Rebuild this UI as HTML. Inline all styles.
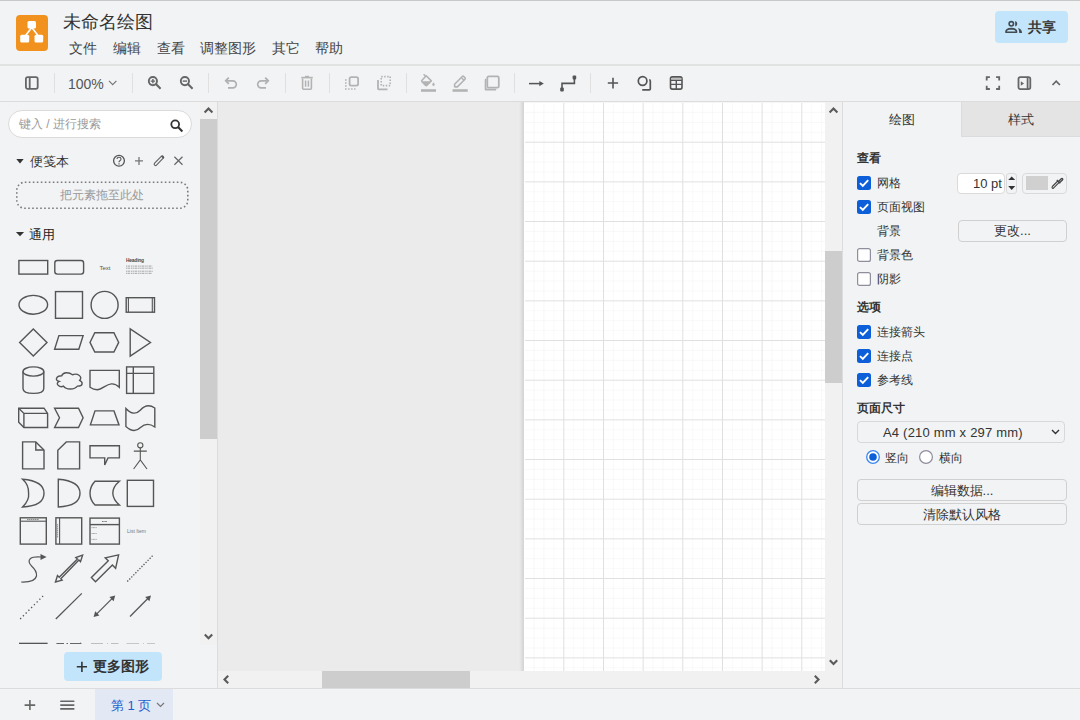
<!DOCTYPE html>
<html><head><meta charset="utf-8">
<style>
*{box-sizing:border-box}
html,body{margin:0;padding:0;width:1080px;height:720px;overflow:hidden;background:#f1f3f4;font-family:"Liberation Sans",sans-serif;color:#333}
.abs{position:absolute}
svg{position:absolute;overflow:visible}
.line{position:absolute;background:#dcdcdc}
.title{left:63px;top:10px;font-size:18px;color:#333;white-space:nowrap}
.menu{top:40px;font-size:14px;color:#444;white-space:nowrap}
.sep{top:73px;width:1px;height:20px;background:#e0e0e0}
.share{left:995px;top:11px;width:73px;height:32px;background:#c2e5fb;border-radius:4px}
.share span{position:absolute;left:33px;top:8px;font-size:14px;font-weight:bold;color:#3a3a3a}
#canvas{left:218px;top:102px;width:607px;height:569px;background:#ebebeb;overflow:hidden}
.sb{background:#f1f1f1}
.thumb{background:#cdcdcd}
.tab2{left:961px;top:102px;width:119px;height:35px;background:#e4e4e4;border-left:1px solid #dadce0;border-bottom:1px solid #dadce0}
.rp{font-size:12px;color:#333;white-space:nowrap}
.rpb{font-weight:bold}
.btn{border:1px solid #d0d0d0;border-radius:4px;background:#f1f3f4;font-size:13px;color:#333;text-align:center}
.sbt{font-size:13px;color:#333;white-space:nowrap}
</style></head><body>
<!-- ===== HEADER ===== -->
<div class="line" style="left:0;top:0;width:1080px;height:1px;background:#c8c8c8"></div>
<svg style="left:16px;top:15px" width="32" height="36" viewBox="0 0 32 36">
<rect x="0" y="0" width="32" height="36" rx="4" fill="#f1921f"/>
<path d="M15.8 12.5 L9.6 20.5 M15.8 12.5 L22 20.5" stroke="#fff" stroke-width="1.6" fill="none"/>
<rect x="11.5" y="6" width="8.5" height="7.6" rx="1.5" fill="#fff"/>
<rect x="4.2" y="19.8" width="9" height="7.7" rx="1.5" fill="#fff"/>
<rect x="18.5" y="19.8" width="8.7" height="7.7" rx="1.5" fill="#fff"/>
</svg>
<div class="abs title">未命名绘图</div>
<div class="abs menu" style="left:69px">文件</div>
<div class="abs menu" style="left:113px">编辑</div>
<div class="abs menu" style="left:157px">查看</div>
<div class="abs menu" style="left:200px">调整图形</div>
<div class="abs menu" style="left:272px">其它</div>
<div class="abs menu" style="left:315px">帮助</div>
<div class="abs share"><span>共享</span>
<svg style="left:10px;top:9px" width="18" height="13" viewBox="0 0 18 13">
<circle cx="6.3" cy="3.85" r="2.2" stroke="#424a52" stroke-width="1.6" fill="none"/>
<path d="M10.2 1.1 A2.8 2.8 0 0 1 10.2 6.5 Z" fill="#424a52"/>
<path d="M0.9 12.2 Q0.9 8.7 6.3 8.6 Q11.6 8.7 11.6 12.2 Z" stroke="#424a52" stroke-width="1.6" fill="none" stroke-linejoin="round"/>
<path d="M13 8 Q17 9 17 13 L14.3 13 Q14.3 10 13 8Z" fill="#424a52"/>
</svg>
</div>
<div class="line" style="left:0;top:64px;width:1080px;height:2px;background:#e1e3e2"></div>
<!-- ===== TOOLBAR ===== -->
<svg style="left:24px;top:75px" width="16" height="16" viewBox="0 0 16 16">
<rect x="1.9" y="2.1" width="11.8" height="11.8" rx="1.8" stroke="#666" stroke-width="1.8" fill="none"/>
<path d="M5.7 2.1 V13.9" stroke="#666" stroke-width="1.8"/>
</svg>
<div class="abs sep" style="left:54px"></div>
<div class="abs" style="left:68px;top:76px;font-size:14px;color:#555">100%</div>
<svg style="left:108px;top:80px" width="10" height="6" viewBox="0 0 10 6"><path d="M1 0.8 L4.7 4.6 L8.4 0.8" stroke="#777" stroke-width="1.2" fill="none"/></svg>
<div class="abs sep" style="left:132px"></div>
<!-- zoom in -->
<svg style="left:145px;top:73px" width="18" height="18" viewBox="0 0 18 18">
<circle cx="7.9" cy="8.1" r="4.1" stroke="#666" stroke-width="1.9" fill="none"/>
<path d="M10.9 11.1 L15.6 15.8" stroke="#666" stroke-width="2.1"/>
<path d="M5.7 8.1 H10.1 M7.9 5.9 V10.3" stroke="#666" stroke-width="1.4"/>
</svg>
<svg style="left:177px;top:73px" width="18" height="18" viewBox="0 0 18 18">
<circle cx="7.9" cy="8.1" r="4.1" stroke="#666" stroke-width="1.9" fill="none"/>
<path d="M10.9 11.1 L15.6 15.8" stroke="#666" stroke-width="2.1"/>
<path d="M5.7 8.1 H10.1" stroke="#666" stroke-width="1.4"/>
</svg>
<div class="abs sep" style="left:208px"></div>
<!-- undo / redo -->
<svg style="left:222px;top:74px" width="18" height="18" viewBox="0 0 18 18">
<path d="M4 6.8 H10.8 A3.5 3.5 0 0 1 10.8 13.8 H6" stroke="#b0b0b0" stroke-width="1.7" fill="none"/>
<path d="M6.8 3.7 L3.7 6.8 L6.8 9.9" stroke="#b0b0b0" stroke-width="1.7" fill="none"/>
</svg>
<svg style="left:254px;top:74px" width="18" height="18" viewBox="0 0 18 18">
<path d="M14 6.8 H7.2 A3.5 3.5 0 0 0 7.2 13.8 H12" stroke="#b0b0b0" stroke-width="1.7" fill="none"/>
<path d="M11.2 3.7 L14.3 6.8 L11.2 9.9" stroke="#b0b0b0" stroke-width="1.7" fill="none"/>
</svg>
<div class="abs sep" style="left:285px"></div>
<!-- delete -->
<svg style="left:298px;top:74px" width="18" height="18" viewBox="0 0 18 18">
<path d="M3.3 3.6 H14.8" stroke="#b3b3b3" stroke-width="1.6"/>
<path d="M7 2.6 H11" stroke="#b3b3b3" stroke-width="1.6"/>
<path d="M4.6 4.5 V14.2 Q4.6 15.2 5.6 15.2 H12.4 Q13.4 15.2 13.4 14.2 V4.5" stroke="#b3b3b3" stroke-width="1.6" fill="none"/>
<path d="M7.6 6.5 V12.8 M10.4 6.5 V12.8" stroke="#b3b3b3" stroke-width="1.5"/>
</svg>
<div class="abs sep" style="left:329px"></div>
<!-- to front -->
<svg style="left:343px;top:74px" width="18" height="18" viewBox="0 0 18 18">
<rect x="6.6" y="3.2" width="8.5" height="8.5" rx="1.6" stroke="#b3b3b3" stroke-width="1.8" fill="none"/>
<path d="M2.8 5.3 V15 H12.5" stroke="#b3b3b3" stroke-width="1.6" stroke-dasharray="1.5 1.5" fill="none"/>
</svg>
<svg style="left:375px;top:74px" width="18" height="18" viewBox="0 0 18 18">
<path d="M6.2 2.6 H15.2 V11.6 H6.2 Z" stroke="#b3b3b3" stroke-width="1.6" stroke-dasharray="1.5 1.5" fill="none"/>
<path d="M3 6 V14.5 Q3 15.3 3.8 15.3 H12.5" stroke="#b3b3b3" stroke-width="1.8" fill="none"/>
</svg>
<div class="abs sep" style="left:406px"></div>
<!-- fill -->
<svg style="left:419px;top:73px" width="18" height="20" viewBox="0 0 18 20">
<path d="M4.6 1.2 L6.4 3" stroke="#b3b3b3" stroke-width="1.5"/>
<path d="M7.2 2.8 L12.3 7.9 L8 12.2 Q7.2 13 6.4 12.2 L3 8.8 Q2.2 8 3 7.2 Z" stroke="#b3b3b3" stroke-width="1.6" fill="none" stroke-linejoin="round"/>
<path d="M3.4 8.3 H11.8 L8 12.2 Q7.2 13 6.4 12.2Z" fill="#b3b3b3"/>
<path d="M14.5 9.3 Q15.8 11 15.8 11.6 A1.3 1.3 0 0 1 13.2 11.6 Q13.2 11 14.5 9.3Z" fill="#b3b3b3"/>
<rect x="2" y="16.2" width="15" height="2.6" fill="#b3b3b3"/>
</svg>
<!-- line color -->
<svg style="left:451px;top:73px" width="18" height="20" viewBox="0 0 18 20">
<path d="M3.6 13.4 V11.2 L11.3 3.5 Q12 2.8 12.7 3.5 L14 4.8 Q14.7 5.5 14 6.2 L6.3 13.9 H4.1Z" stroke="#b3b3b3" stroke-width="1.6" fill="none" stroke-linejoin="round"/>
<path d="M10.2 4.6 L12.9 7.3" stroke="#b3b3b3" stroke-width="1.4"/>
<rect x="1.6" y="16.2" width="15.1" height="2.6" fill="#b3b3b3"/>
</svg>
<!-- shadow -->
<svg style="left:483px;top:74px" width="18" height="18" viewBox="0 0 18 18">
<path d="M3.3 4.8 H2.7 Q1.7 4.8 1.7 5.8 V15.4 Q1.7 16.4 2.7 16.4 H12.3 Q13.3 16.4 13.3 15.4 V14.8 H4.3 Q3.3 14.8 3.3 13.8 Z" fill="#b3b3b3"/>
<rect x="4.3" y="2.4" width="11.5" height="11.3" rx="1.5" stroke="#b3b3b3" stroke-width="1.8" fill="none"/>
</svg>
<div class="abs sep" style="left:514px"></div>
<!-- arrow -->
<svg style="left:527px;top:74px" width="18" height="18" viewBox="0 0 18 18">
<path d="M2 9.6 H14" stroke="#555" stroke-width="1.5"/>
<path d="M12.3 6.9 L16.8 9.6 L12.3 12.3 Z" fill="#555"/>
</svg>
<!-- waypoints -->
<svg style="left:558px;top:74px" width="20" height="18" viewBox="0 0 20 18">
<path d="M4 15 V9.4 H16.4 V3" stroke="#555" stroke-width="1.6" fill="none"/>
<rect x="2.2" y="13.6" width="3.6" height="4" rx="1" fill="#555"/>
<rect x="14.6" y="1.6" width="3.6" height="4" rx="1" fill="#555"/>
</svg>
<div class="abs sep" style="left:590px"></div>
<!-- plus -->
<svg style="left:604px;top:74px" width="18" height="18" viewBox="0 0 18 18">
<path d="M3.8 9 H14.1 M9 3.7 V14.4" stroke="#555" stroke-width="1.6"/>
</svg>
<!-- shapes -->
<svg style="left:635px;top:74px" width="18" height="18" viewBox="0 0 18 18">
<circle cx="7.6" cy="7" r="4.3" stroke="#555" stroke-width="1.7" fill="none"/>
<path d="M14.2 5.8 Q15.3 5.8 15.3 6.9 V14.8 Q15.3 15.8 14.3 15.8 H7.2" stroke="#555" stroke-width="1.7" fill="none"/>
</svg>
<!-- table -->
<svg style="left:667px;top:74px" width="18" height="18" viewBox="0 0 18 18">
<rect x="3.5" y="2.9" width="11.5" height="12.2" rx="1.8" stroke="#555" stroke-width="1.6" fill="none"/>
<rect x="4" y="4" width="10.5" height="1.7" fill="#bdbdbd"/>
<path d="M3.5 6.4 H15 M3.5 10.4 H15 M9.3 6.4 V15" stroke="#555" stroke-width="1.4"/>
</svg>
<!-- right toolbar -->
<svg style="left:984px;top:74px" width="18" height="18" viewBox="0 0 18 18">
<path d="M2.7 6.4 V3.2 H5.9 M12.1 3.2 H15.2 V6.4 M15.2 11.8 V15 H12.1 M5.9 15 H2.7 V11.8" stroke="#666" stroke-width="1.8" fill="none"/>
</svg>
<svg style="left:1016px;top:74px" width="18" height="18" viewBox="0 0 18 18">
<rect x="2.5" y="3.2" width="11.8" height="11.9" rx="1.8" stroke="#666" stroke-width="1.8" fill="none"/>
<path d="M11.6 3.2 V15.1" stroke="#666" stroke-width="1.8"/>
<path d="M4.8 7.3 L8 9.5 L4.8 11.7Z" fill="#666"/>
</svg>
<svg style="left:1050px;top:76px" width="12" height="12" viewBox="0 0 12 12">
<path d="M2.5 9 L6.2 5.2 L9.9 9" stroke="#666" stroke-width="1.7" fill="none"/>
</svg>
<div class="line" style="left:0;top:101px;width:1080px;height:1px"></div>
<!-- ===== SIDEBAR ===== -->
<div class="abs" style="left:8px;top:110px;width:184px;height:28px;background:#fff;border:1px solid #dadada;border-radius:14px"></div>
<div class="abs" style="left:19px;top:116px;font-size:12px;color:#9a9a9a;white-space:nowrap">键入 / 进行搜索</div>
<svg style="left:168px;top:117px" width="18" height="18" viewBox="0 0 18 18">
<circle cx="7.2" cy="7.3" r="3.9" stroke="#333" stroke-width="1.8" fill="none"/>
<path d="M10 10.1 L14.4 14.5" stroke="#333" stroke-width="2.1"/>
</svg>
<svg style="left:0;top:0" width="200" height="250" viewBox="0 0 200 250">
<path d="M16.3 159 H23.7 L20 163.5Z" fill="#333"/>
<path d="M15.9 232 H24.1 L20 236.2Z" fill="#333"/>
<circle cx="119" cy="160.8" r="5.4" stroke="#555" stroke-width="1.3" fill="none"/>
<path d="M117 159 Q117 157.2 119 157.2 Q121 157.2 121 159 Q121 160.2 119.9 160.7 Q119 161.2 119 162.3" stroke="#555" stroke-width="1.1" fill="none"/>
<rect x="118.4" y="163.3" width="1.2" height="1.2" fill="#555"/>
<path d="M139 157 V165 M135 160.9 H143" stroke="#777" stroke-width="1.3"/>
<path d="M154.8 165.4 Q153.6 164.3 154.6 163.2 L161.3 156.3 Q162.3 155.4 163.2 156.3 Q164.1 157.2 163.2 158.2 L156.5 165.1 Q155.6 166.1 154.8 165.4Z" stroke="#666" stroke-width="1.2" fill="none" stroke-linejoin="round"/>
<path d="M161.6 156 L163.8 158.2" stroke="#555" stroke-width="1.6"/>
<path d="M174.4 156.8 L182.5 164.8 M182.5 156.8 L174.4 164.8" stroke="#666" stroke-width="1.2"/>
<rect x="16.8" y="182.3" width="171" height="26" rx="8" stroke="#7a7a7a" stroke-width="1.6" stroke-dasharray="1.6 2.4" fill="none"/>
</svg>

<div class="abs sbt" style="left:30px;top:153px">便笺本</div>
<div class="abs" style="left:60px;top:187px;font-size:12px;color:#9a9a9a;white-space:nowrap">把元素拖至此处</div>
<div class="abs sbt" style="left:29px;top:226px;color:#222">通用</div>
<svg style="left:0;top:0" width="200" height="646" viewBox="0 0 200 646">
<defs><clipPath id="sbclip"><rect x="0" y="102" width="200" height="542"/></clipPath></defs>
<g clip-path="url(#sbclip)" stroke="#555" stroke-width="1.4" fill="none">
<!-- row1 -->
<rect x="18.9" y="260.5" width="28.8" height="13.6"/>
<rect x="54.8" y="260.5" width="28.8" height="13.6" rx="2.5"/>
<!-- row2 -->
<ellipse cx="33.3" cy="304.8" rx="14.3" ry="9.4"/>
<rect x="55.5" y="291.6" width="27" height="26.7"/>
<circle cx="104.6" cy="304.9" r="13.5"/>
<rect x="126.2" y="297.7" width="28.3" height="14.5"/>
<path d="M128.4 297.7 V312.2 M152.3 297.7 V312.2" stroke-width="1.1"/>
<!-- row3 -->
<path d="M33.3 328.9 L47 342.5 L33.3 356.1 L19.6 342.5Z"/>
<path d="M58.9 335.6 H83.1 L78.8 349.2 H54.6Z"/>
<path d="M94.8 332.7 H113.9 L118.7 342.4 L113.9 352 H94.8 L90 342.4Z"/>
<path d="M130.2 328.9 L150.5 342.5 L130.2 356.1Z"/>
<!-- row4 -->
<path d="M23 371.5 V388.5 Q23 393.4 33.4 393.4 Q43.8 393.4 43.8 388.5 V371.5"/>
<ellipse cx="33.4" cy="371.5" rx="10.4" ry="4.6"/>
<path d="M61.71 375.68 C55.97 375.68 54.54 380.44 59.13 381.39 C54.54 383.48 59.70 388.05 63.43 386.15 C66.01 389.95 74.61 389.95 77.48 386.15 C83.22 386.15 83.22 382.34 79.63 380.44 C83.22 376.64 77.48 372.83 72.46 374.73 C68.88 371.88 63.14 371.88 61.71 375.68Z"/>
<path d="M90 370.4 H119.3 V387.3 C116.5 384.5 113.5 383.7 111.3 383.9 C106 384.3 102 389.7 97.3 389.7 C94.5 389.7 92 388.6 90 387.2Z"/>
<rect x="126.6" y="366.9" width="27.2" height="26.5"/>
<path d="M133.3 366.9 V393.4 M126.6 373.4 H153.8"/>
<!-- row5 -->
<path d="M18.7 408.2 H44 L47.6 413.4 V427.5 H23.9 L18.7 422.3Z"/>
<path d="M18.7 408.2 L23.9 413.4 H47.6 M23.9 413.4 V427.5"/>
<path d="M54.6 408.2 H78.5 L83.1 417.8 L78.5 427.5 H54.6 L59.5 417.8Z"/>
<path d="M95 410.9 H114 L119 424.9 H90.4Z"/>
<path d="M125.9 408.5 Q134 417 140.5 410 Q147 402.5 154.8 408 V427 Q147 421.5 140.5 427.5 Q134 434 125.9 426.5Z"/>
<!-- row6 -->
<path d="M22.6 441.9 H35.8 L44 450 V468.9 H22.6Z"/>
<path d="M35.8 441.9 V450 H44"/>
<path d="M66.3 441.9 H79.6 V468.9 H57.8 V450.2Z"/>
<path d="M90 445.8 H119.4 V457.9 H108 L104.7 465 V457.9 H90Z"/>
<circle cx="140.3" cy="445.3" r="2.6" stroke-width="1.1"/>
<path d="M140.3 447.9 V460 M133.8 451.1 H146.8 M133.6 469 L140.3 460 L147 469" stroke-width="1.1"/>
<!-- row7 -->
<path d="M22.6 479.3 Q44 481 44 493.3 Q44 506 22.6 507 Q29.5 500 28.6 493.3 Q29 485 22.6 479.3Z"/>
<path d="M58.3 479.3 Q80 481 80 493.3 Q80 506 58.3 507Z"/>
<path d="M95 481.2 H119.4 Q112.6 487 112.8 493.2 Q113 499.5 119.4 505 H95 Q90 500 90 493.2 Q90 486.5 95 481.2Z"/>
<rect x="127.3" y="480.3" width="26.2" height="26.1"/>
<!-- row8 -->
<rect x="20.3" y="517.8" width="26" height="26.3"/>
<path d="M20.3 521.2 H46.3" stroke-width="1.1"/>
<rect x="55.9" y="517.8" width="25.8" height="26.3"/>
<path d="M59.6 517.8 V544.1" stroke-width="1.1"/>
<rect x="90" y="518.1" width="29.4" height="26"/>
<path d="M90 524.6 H119.4" stroke-width="1.4"/>
<path d="M102 521.5 H107" stroke="#777" stroke-width="1.1" stroke-dasharray="1 0.4"/>
<path d="M91.5 527.6 H97 M91.5 533.5 H97 M91.5 539.4 H97" stroke="#999" stroke-width="0.9" stroke-dasharray="1 0.4"/>
<path d="M27 519.6 H39" stroke="#777" stroke-width="0.9" stroke-dasharray="1.5 0.4"/>
<path d="M57.6 524 V538" stroke="#888" stroke-width="0.9" stroke-dasharray="1.5 0.5"/>
<!-- row9 -->
<path d="M21.2 582 Q35 582.5 36.5 576 Q37 571 32 566.5 Q27 561.5 30.5 558.5 Q33 556.5 41 557" stroke-width="1.25"/>
<path d="M40.5 553.9 L46.6 557 L40.5 560Z" fill="#555" stroke="none"/>
<path d="M55.5 582 L57.5 575.6 L59.2 577.2 L77.4 559.1 L75.8 557.5 L82.6 555.2 L80.5 561.6 L78.9 560 L60.8 578.8 L62.1 580.2Z"/>
<path d="M91.4 577.6 L108.3 560.8 L105.2 557.8 L118.6 554.8 L115.6 568.3 L112.4 565 L95.5 581.7Z"/>
<path d="M127.3 581.5 L152.7 555.6" stroke-width="1.3" stroke-dasharray="1.3 1.6"/>
<!-- row10 -->
<path d="M20.2 619 L44.4 594.6" stroke-width="1.3" stroke-dasharray="1.3 2.6"/>
<path d="M55.8 619 L81.8 593.4" stroke-width="1.25"/>
<path d="M96 614.6 L113 597.6" stroke-width="1.25"/>
<path d="M93.6 617 L95.2 611.2 L99.4 615.4Z M115.2 595.4 L113.6 601.2 L109.4 597Z" fill="#555" stroke="none"/>
<path d="M130 616.5 L148.6 597.8" stroke-width="1.25"/>
<path d="M151 595.4 L149.4 601.2 L145.2 597Z" fill="#555" stroke="none"/>
<!-- row11 -->
<path d="M19 643.8 H47.6" stroke-width="2.2"/>
<path d="M56.4 644 H64 M66.5 644 H68 M70 644 H80" stroke-width="2" stroke="#666"/>
<path d="M80 642.2 L82 644 L80 645Z" fill="#666" stroke="none"/>
<path d="M91 644.2 H103 M107 644.2 H108 M111 644.2 H118.5" stroke-width="1.3" stroke="#8a8a8a"/>
<path d="M126.5 644.2 H139 M143 644.2 H144 M147 644.2 H155" stroke-width="1.3" stroke="#9a9a9a"/>
</g>
</svg>
<div class="abs" style="left:99.5px;top:263px;font-size:6px;line-height:10px;color:#555">Text</div>
<svg style="left:0;top:0" width="200" height="300">
<path d="M126 266.1 H152.5 M126 268.2 H153 M126 271.2 H153 M126 273.3 H151.5" stroke="#9c9c9c" stroke-width="0.9" stroke-dasharray="1.2 0.5 2.5 0.8 1.5 0.6"/>
</svg>
<div class="abs" style="left:126px;top:257px;font-size:4.8px;letter-spacing:-0.15px;line-height:8px;font-weight:bold;color:#444;white-space:nowrap">Heading</div>
<div class="abs" style="left:127px;top:528px;font-size:5px;color:#777;white-space:nowrap">List Item</div>
<!-- sidebar scrollbar -->
<div class="line" style="left:217px;top:102px;width:1px;height:586px"></div>
<div class="abs sb" style="left:200px;top:102px;width:17px;height:543px"></div>
<div class="abs thumb" style="left:200px;top:119px;width:17px;height:320px"></div>
<svg style="left:200px;top:102px" width="17" height="17" viewBox="0 0 17 17"><path d="M4.6 10.6 L8.5 6.6 L12.4 10.6" stroke="#5a5a5a" stroke-width="2.1" fill="none"/></svg>
<svg style="left:200px;top:628px" width="17" height="17" viewBox="0 0 17 17"><path d="M4.8 6.5 L8.5 10.3 L12.2 6.5" stroke="#5a5a5a" stroke-width="2.1" fill="none"/></svg>
<div class="abs" style="left:64px;top:652px;width:98px;height:29px;background:#c2e5fb;border-radius:4px"></div>
<svg style="left:74px;top:658px" width="16" height="16" viewBox="0 0 16 16"><path d="M2.8 8.8 H13 M7.9 3.7 V13.9" stroke="#333" stroke-width="1.6"/></svg>
<div class="abs" style="left:93px;top:658px;font-size:14px;font-weight:bold;color:#333;white-space:nowrap">更多图形</div>

<!-- ===== CANVAS ===== -->
<div class="abs" style="left:218px;top:102px;width:607px;height:569px;background:#ebebeb;overflow:hidden">
<div class="abs" style="left:301px;top:0;width:5px;height:569px;background:linear-gradient(to right,#ebebeb,#e2e2e2 45%,#d4d4d4 85%,#d9d9d9)"></div>
<div class="abs" style="left:306px;top:0;width:320px;height:569px;background:#fff"></div>
<svg style="left:306px;top:0" width="301" height="569">
<path d="M10.05 0V569 M19.97 0V569 M29.88 0V569 M49.72 0V569 M59.63 0V569 M69.55 0V569 M89.38 0V569 M99.30 0V569 M109.22 0V569 M129.05 0V569 M138.97 0V569 M148.88 0V569 M168.72 0V569 M178.63 0V569 M188.55 0V569 M208.38 0V569 M218.30 0V569 M228.22 0V569 M248.05 0V569 M257.97 0V569 M267.88 0V569 M287.72 0V569 M297.63 0V569 M1 10.45H301 M1 20.37H301 M1 30.28H301 M1 50.12H301 M1 60.03H301 M1 69.95H301 M1 89.78H301 M1 99.70H301 M1 109.62H301 M1 129.45H301 M1 139.37H301 M1 149.28H301 M1 169.12H301 M1 179.03H301 M1 188.95H301 M1 208.78H301 M1 218.70H301 M1 228.62H301 M1 248.45H301 M1 258.37H301 M1 268.28H301 M1 288.12H301 M1 298.03H301 M1 307.95H301 M1 327.78H301 M1 337.70H301 M1 347.62H301 M1 367.45H301 M1 377.37H301 M1 387.28H301 M1 407.12H301 M1 417.03H301 M1 426.95H301 M1 446.78H301 M1 456.70H301 M1 466.62H301 M1 486.45H301 M1 496.37H301 M1 506.28H301 M1 526.12H301 M1 536.04H301 M1 545.95H301 M1 565.79H301" stroke="#e0e0e0" stroke-width="1" opacity="0.2" fill="none"/>
<path d="M39.80 0V569 M79.47 0V569 M119.13 0V569 M158.80 0V569 M198.47 0V569 M238.13 0V569 M277.80 0V569 M1 40.20H301 M1 79.87H301 M1 119.53H301 M1 159.20H301 M1 198.87H301 M1 238.53H301 M1 278.20H301 M1 317.87H301 M1 357.53H301 M1 397.20H301 M1 436.87H301 M1 476.53H301 M1 516.20H301 M1 555.87H301" stroke="#e0e0e0" stroke-width="1" fill="none"/>
<rect x="0" y="0" width="301" height="1" fill="#f6f6f6"/>
</svg>
</div>
<div class="abs sb" style="left:825px;top:102px;width:17px;height:586px"></div>
<div class="abs thumb" style="left:825px;top:251px;width:17px;height:132px"></div>
<div class="abs sb" style="left:218px;top:671px;width:607px;height:17px"></div>
<div class="abs thumb" style="left:322px;top:671px;width:148px;height:17px"></div>
<svg style="left:825px;top:102px" width="17" height="17" viewBox="0 0 17 17"><path d="M4.6 10.6 L8.5 6.6 L12.4 10.6" stroke="#5a5a5a" stroke-width="2.1" fill="none"/></svg>
<svg style="left:825px;top:654px" width="17" height="17" viewBox="0 0 17 17"><path d="M4.8 6.2 L8.5 10 L12.2 6.2" stroke="#5a5a5a" stroke-width="2.1" fill="none"/></svg>
<svg style="left:218px;top:671px" width="17" height="17" viewBox="0 0 17 17"><path d="M10.2 4.8 L6.5 8.5 L10.2 12.2" stroke="#5a5a5a" stroke-width="2.1" fill="none"/></svg>
<svg style="left:808px;top:671px" width="17" height="17" viewBox="0 0 17 17"><path d="M6.8 4.8 L10.5 8.5 L6.8 12.2" stroke="#5a5a5a" stroke-width="2.1" fill="none"/></svg>
<div class="line" style="left:842px;top:102px;width:1px;height:586px"></div>

<!-- ===== RIGHT PANEL ===== -->
<div class="abs tab2"></div>
<div class="abs rp" style="left:889px;top:111px;font-size:13px">绘图</div>
<div class="abs rp" style="left:1008px;top:111px;font-size:13px">样式</div>
<div class="abs rp rpb" style="left:857px;top:150px">查看</div>
<svg style="left:857px;top:176px" width="14" height="14" viewBox="0 0 14 14"><rect x="0" y="0" width="14" height="14" rx="2.5" fill="#0d5fd9"/><path d="M3 7.2 L5.8 10 L11.2 4.2" stroke="#fff" stroke-width="1.9" fill="none"/></svg>
<div class="abs rp" style="left:877px;top:175px">网格</div>
<svg style="left:857px;top:200px" width="14" height="14" viewBox="0 0 14 14"><rect x="0" y="0" width="14" height="14" rx="2.5" fill="#0d5fd9"/><path d="M3 7.2 L5.8 10 L11.2 4.2" stroke="#fff" stroke-width="1.9" fill="none"/></svg>
<div class="abs rp" style="left:877px;top:199px">页面视图</div>
<div class="abs rp" style="left:877px;top:223px">背景</div>
<svg style="left:857px;top:248px" width="14" height="14" viewBox="0 0 14 14"><rect x="0.6" y="0.6" width="12.8" height="12.8" rx="2" fill="#fff" stroke="#8e8e9c" stroke-width="1.2"/></svg>
<div class="abs rp" style="left:877px;top:247px">背景色</div>
<svg style="left:857px;top:272px" width="14" height="14" viewBox="0 0 14 14"><rect x="0.6" y="0.6" width="12.8" height="12.8" rx="2" fill="#fff" stroke="#8e8e9c" stroke-width="1.2"/></svg>
<div class="abs rp" style="left:877px;top:271px">阴影</div>
<div class="abs" style="left:957px;top:173px;width:48px;height:21px;background:#fff;border:1px solid #dadada;border-radius:4px"></div>
<div class="abs rp" style="left:973px;top:176px;font-size:13px">10 pt</div>
<div class="abs" style="left:1006px;top:173px;width:11px;height:21px;border:1px solid #dadada;border-radius:3px"></div>
<svg style="left:1006px;top:173px" width="11" height="21" viewBox="0 0 11 21"><path d="M2.2 7.1 L5.7 3.4 L9.2 7.1Z M2.2 13 L5.7 16.9 L9.2 13Z" fill="#333"/></svg>
<div class="abs" style="left:1022px;top:173px;width:45px;height:21px;border:1px solid #dadada;border-radius:4px"></div>
<div class="abs" style="left:1026px;top:176px;width:22px;height:14px;background:#d0d0d0"></div>
<svg style="left:1050px;top:176px" width="14" height="14" viewBox="0 0 14 14"><path d="M2.6 12.4 Q1.6 11.6 2.3 10.5 L7.8 5 L9.2 6.4 L3.7 11.9 Q2.9 12.7 2.6 12.4Z" stroke="#444" stroke-width="1.1" fill="none" stroke-linejoin="round"/><path d="M6.8 4 L10.2 7.4 M8.8 5.2 L11 3 Q12 2 12.6 2.6 Q13.2 3.2 12.2 4.2 L10 6.4" stroke="#444" stroke-width="1.3" fill="none"/></svg>
<div class="abs btn" style="left:958px;top:220px;width:109px;height:22px;line-height:20px">更改...</div>
<div class="abs rp rpb" style="left:857px;top:299px">选项</div>
<svg style="left:857px;top:325px" width="14" height="14" viewBox="0 0 14 14"><rect x="0" y="0" width="14" height="14" rx="2.5" fill="#0d5fd9"/><path d="M3 7.2 L5.8 10 L11.2 4.2" stroke="#fff" stroke-width="1.9" fill="none"/></svg>
<div class="abs rp" style="left:877px;top:324px">连接箭头</div>
<svg style="left:857px;top:349px" width="14" height="14" viewBox="0 0 14 14"><rect x="0" y="0" width="14" height="14" rx="2.5" fill="#0d5fd9"/><path d="M3 7.2 L5.8 10 L11.2 4.2" stroke="#fff" stroke-width="1.9" fill="none"/></svg>
<div class="abs rp" style="left:877px;top:348px">连接点</div>
<svg style="left:857px;top:373px" width="14" height="14" viewBox="0 0 14 14"><rect x="0" y="0" width="14" height="14" rx="2.5" fill="#0d5fd9"/><path d="M3 7.2 L5.8 10 L11.2 4.2" stroke="#fff" stroke-width="1.9" fill="none"/></svg>
<div class="abs rp" style="left:877px;top:372px">参考线</div>
<div class="abs rp rpb" style="left:857px;top:400px">页面尺寸</div>
<div class="abs" style="left:857px;top:421px;width:208px;height:22px;border:1px solid #d8d8d8;border-radius:4px"></div>
<div class="abs rp" style="left:883px;top:425px;font-size:13px;letter-spacing:0.2px">A4 (210 mm x 297 mm)</div>
<svg style="left:1050px;top:427px" width="12" height="10" viewBox="0 0 12 10"><path d="M2 3 L5.5 6.5 L9 3" stroke="#333" stroke-width="1.4" fill="none"/></svg>
<svg style="left:866px;top:450px" width="14" height="14" viewBox="0 0 14 14"><circle cx="7" cy="7" r="6.3" fill="#fff" stroke="#3b86f0" stroke-width="1.3"/><circle cx="7" cy="7" r="3.8" fill="#0d5fd9"/></svg>
<div class="abs rp" style="left:885px;top:450px">竖向</div>
<svg style="left:919px;top:450px" width="14" height="14" viewBox="0 0 14 14"><circle cx="7" cy="7" r="6.4" fill="#fff" stroke="#8e8e9c" stroke-width="1.2"/></svg>
<div class="abs rp" style="left:939px;top:450px">横向</div>
<div class="abs btn" style="left:857px;top:479px;width:210px;height:22px;line-height:22px">编辑数据...</div>
<div class="abs btn" style="left:857px;top:503px;width:210px;height:22px;line-height:22px">清除默认风格</div>

<div class="line" style="left:0;top:688px;width:1080px;height:1px"></div>
<!-- ===== FOOTER ===== -->
<svg style="left:21px;top:697px" width="18" height="18" viewBox="0 0 18 18"><path d="M3.6 8.1 H14.2 M8.9 3.1 V13" stroke="#666" stroke-width="1.6"/></svg>
<svg style="left:58px;top:697px" width="18" height="18" viewBox="0 0 18 18"><path d="M2.8 4.3 H15.8 M2.8 8.1 H15.8 M2.8 11.9 H15.8" stroke="#666" stroke-width="1.6" stroke-linecap="round"/></svg>
<div class="abs" style="left:95px;top:689px;width:78px;height:31px;background:#e2e8f4"></div>
<div class="abs" style="left:111px;top:697px;font-size:13px;color:#1c5fcf;white-space:nowrap">第 1 页</div>
<svg style="left:155px;top:700px" width="12" height="10" viewBox="0 0 12 10"><path d="M2 3 L5.5 6.5 L9 3" stroke="#777" stroke-width="1.2" fill="none"/></svg>

</body></html>
